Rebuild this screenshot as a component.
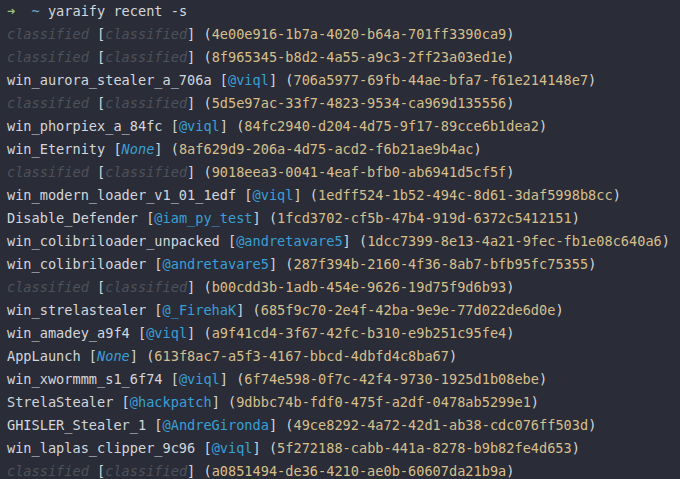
const ROWS = [
  [null, null, "4e00e916-1b7a-4020-b64a-701ff3390ca9"],
  [null, null, "8f965345-b8d2-4a55-a9c3-2ff23a03ed1e"],
  ["win_aurora_stealer_a_706a", "@viql", "706a5977-69fb-44ae-bfa7-f61e214148e7"],
  [null, null, "5d5e97ac-33f7-4823-9534-ca969d135556"],
  ["win_phorpiex_a_84fc", "@viql", "84fc2940-d204-4d75-9f17-89cce6b1dea2"],
  ["win_Eternity", "None", "8af629d9-206a-4d75-acd2-f6b21ae9b4ac"],
  [null, null, "9018eea3-0041-4eaf-bfb0-ab6941d5cf5f"],
  ["win_modern_loader_v1_01_1edf", "@viql", "1edff524-1b52-494c-8d61-3daf5998b8cc"],
  ["Disable_Defender", "@iam_py_test", "1fcd3702-cf5b-47b4-919d-6372c5412151"],
  ["win_colibriloader_unpacked", "@andretavare5", "1dcc7399-8e13-4a21-9fec-fb1e08c640a6"],
  ["win_colibriloader", "@andretavare5", "287f394b-2160-4f36-8ab7-bfb95fc75355"],
  [null, null, "b00cdd3b-1adb-454e-9626-19d75f9d6b93"],
  ["win_strelastealer", "@_FirehaK", "685f9c70-2e4f-42ba-9e9e-77d022de6d0e"],
  ["win_amadey_a9f4", "@viql", "a9f41cd4-3f67-42fc-b310-e9b251c95fe4"],
  ["AppLaunch", "None", "613f8ac7-a5f3-4167-bbcd-4dbfd4c8ba67"],
  ["win_xwormmm_s1_6f74", "@viql", "6f74e598-0f7c-42f4-9730-1925d1b08ebe"],
  ["StrelaStealer", "@hackpatch", "9dbbc74b-fdf0-475f-a2df-0478ab5299e1"],
  ["GHISLER_Stealer_1", "@AndreGironda", "49ce8292-4a72-42d1-ab38-cdc076ff503d"],
  ["win_laplas_clipper_9c96", "@viql", "5f272188-cabb-441a-8278-b9b82fe4d653"],
  [null, null, "a0851494-de36-4210-ae0b-60607da21b9a"],
];

function Row({ name, author, id }) {
  const hidden = name === null;
  return (
    <div className="whitespace-pre">
      {hidden ? (
        <span className="italic text-[#4d515c]">classified</span>
      ) : (
        <span className="text-[#d3d6dd]">{name}</span>
      )}
      <span className="text-[#d3d6dd]"> [</span>
      {hidden ? (
        <span className="italic text-[#4d515c]">classified</span>
      ) : author === "None" ? (
        <span className="italic text-[#3a9fd6]">None</span>
      ) : (
        <span className="text-[#3a9fd6]">{author}</span>
      )}
      <span className="text-[#d3d6dd]">] (</span>
      <span className="text-[#d6bf8c]">{id}</span>
      <span className="text-[#d3d6dd]">)</span>
    </div>
  );
}

export default function App() {
  return (
    <div
      className="w-[680px] h-[479px] overflow-hidden bg-[#2a2d37] pl-[7px] text-[13.6px] leading-[23px]"
      style={{ fontFamily: '"DejaVu Sans Mono", monospace' }}
    >
      <div className="whitespace-pre">
        <span className="text-[#9cc07a] font-bold">➜</span>
        <span>  </span>
        <span className="text-[#6fa9c4]">~</span>
        <span className="text-[#d3d6dd]"> yaraify recent -s</span>
      </div>
      {ROWS.map(([name, author, id]) => (
        <Row key={id} name={name} author={author} id={id} />
      ))}
    </div>
  );
}
